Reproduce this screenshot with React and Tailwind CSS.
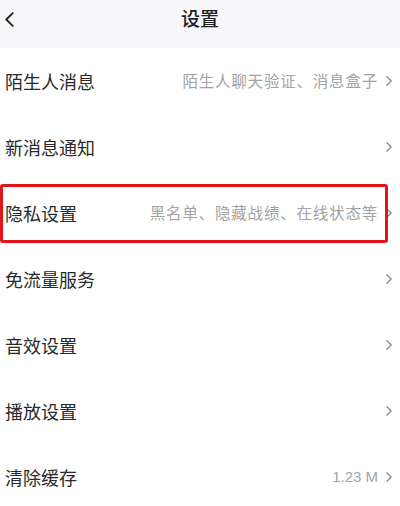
const rows = [
  { label: "陌生人消息", hint: "陌生人聊天验证、消息盒子" },
  { label: "新消息通知" },
  { label: "隐私设置", hint: "黑名单、隐藏战绩、在线状态等", marked: true },
  { label: "免流量服务" },
  { label: "音效设置" },
  { label: "播放设置" },
  { label: "清除缓存", hint: "1.23 M", plain: true },
];

function Chevron({ left, className }) {
  return (
    <svg viewBox="0 0 8 14" className={className} fill="none">
      <polyline
        points={left ? "7,1 1,7 7,13" : "1,1 7,7 1,13"}
        stroke="currentColor"
        strokeWidth="1.7"
        strokeLinecap="round"
        strokeLinejoin="round"
      />
    </svg>
  );
}

function Row({ label, hint, marked, plain }) {
  return (
    <div className="relative flex h-[66px] items-center justify-between pl-[5px] pr-[8px]">
      <span className="text-[18px] text-[#2a2a2a]">{label}</span>
      <div className="flex items-center gap-[8px]">
        {hint && (
          <span
            className={
              plain
                ? "text-[15px] text-[#a3a3a3] font-['Liberation_Sans',sans-serif]"
                : "text-[15.5px] tracking-[0.8px] text-[#a3a3a3]"
            }
          >
            {hint}
          </span>
        )}
        <Chevron className="h-[10px] w-[6px] text-[#8a8a8a]" />
      </div>
      {marked && (
        <div className="pointer-events-none absolute left-0 right-[12px] top-[4px] bottom-[3px] rounded-[3px] border-[3.5px] border-[#e3151b]" />
      )}
    </div>
  );
}

export default function App() {
  return (
    <div className="h-[506px] w-[400px] overflow-hidden bg-white font-['Noto_Sans_CJK_SC',sans-serif]">
      <header className="relative flex h-[48px] items-start justify-center bg-[#f7f7f9] pt-[4px]">
        <Chevron left className="absolute left-[5px] top-[12px] h-[15px] w-[9px] text-[#222]" />
        <h1 className="text-[19px] font-medium text-[#222]">设置</h1>
      </header>
      {rows.map((r) => (
        <Row key={r.label} {...r} />
      ))}
    </div>
  );
}
